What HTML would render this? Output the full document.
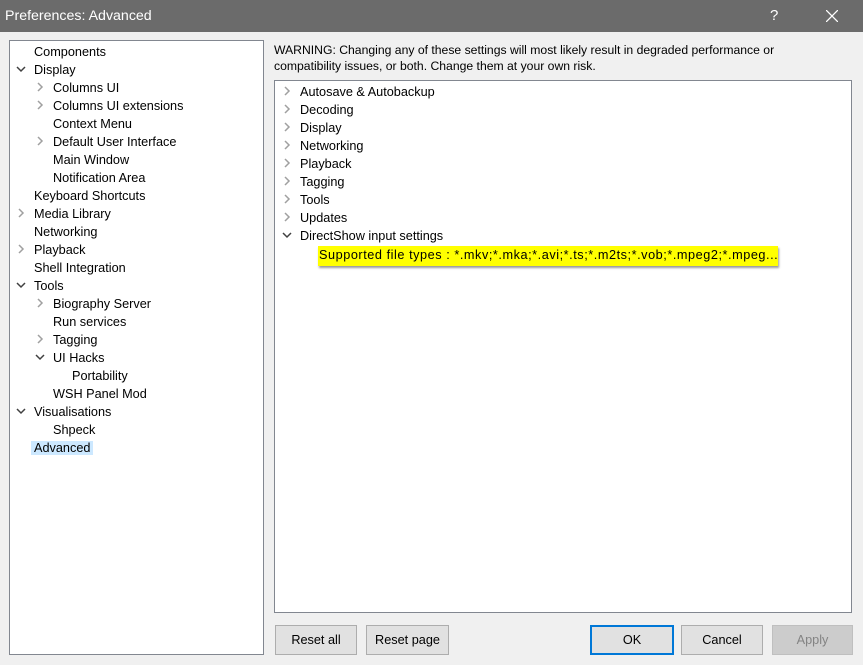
<!DOCTYPE html><html><head><style>
body{margin:0;width:863px;height:665px;background:#f0f0f0;font-family:"Liberation Sans",sans-serif;font-size:12.7px;color:#000;position:relative;overflow:hidden}
.t{position:absolute;white-space:nowrap;line-height:18px;height:18px}
.box{position:absolute;background:#fff;border:1px solid #828790}
.btn{position:absolute;top:625px;height:28px;background:#e1e1e1;border:1px solid #adadad;text-align:center;line-height:28px;font-size:12.7px}
svg.c{position:absolute}
.sel{background:#cce8ff;padding:0 3px;margin-left:-3px}
</style></head><body>
<div style="position:absolute;left:0;top:0;width:863px;height:32px;background:#6b6b6b;color:#fff">
<div style="position:absolute;left:5px;top:8px;font-size:14.2px">Preferences: Advanced</div>
<div style="position:absolute;left:770px;top:7px;font-size:15px">?</div>
<svg style="position:absolute;left:826px;top:10px" width="12" height="12"><path d="M0 0L12 12M12 0L0 12" stroke="#fff" stroke-width="1.3"/></svg>
</div>
<div class="box" style="left:9px;top:40px;width:253px;height:613px"></div>
<div class="t" style="left:274px;top:41px;font-size:12.2px">WARNING: Changing any of these settings will most likely result in degraded performance or</div>
<div class="t" style="left:274px;top:57px;font-size:12.2px">compatibility issues, or both. Change them at your own risk.</div>
<div class="box" style="left:274px;top:80px;width:576px;height:531px"></div>
<div id="L"></div><div id="R"></div>
<div style="position:absolute;left:318px;top:246px;width:460px;height:20px;background:#ffff00;box-shadow:1px 2px 2px #999"></div>
<div class="t" style="left:319px;top:246px;letter-spacing:0.55px">Supported file types : *.mkv;*.mka;*.avi;*.ts;*.m2ts;*.vob;*.mpeg2;*.mpeg...</div>
<div class="btn" style="left:275px;width:80px">Reset all</div>
<div class="btn" style="left:366px;width:81px">Reset page</div>
<div class="btn" style="left:590px;width:80px;border:2px solid #0078d7;height:26px;line-height:26px">OK</div>
<div class="btn" style="left:681px;width:80px">Cancel</div>
<div class="btn" style="left:772px;width:79px;background:#cccccc;border-color:#bfbfbf;color:#838383">Apply</div>
<script>
var L=[["Components",0,0],["Display",0,2],["Columns UI",1,1],["Columns UI extensions",1,1],["Context Menu",1,0],["Default User Interface",1,1],["Main Window",1,0],["Notification Area",1,0],["Keyboard Shortcuts",0,0],["Media Library",0,1],["Networking",0,0],["Playback",0,1],["Shell Integration",0,0],["Tools",0,2],["Biography Server",1,1],["Run services",1,0],["Tagging",1,1],["UI Hacks",1,2],["Portability",2,0],["WSH Panel Mod",1,0],["Visualisations",0,2],["Shpeck",1,0],["Advanced",0,3]];
var h="";
function chev(x,y,o){return o==1?'<svg class="c" style="left:'+(x-3)+'px;top:'+(y-5)+'px" width="8" height="10"><path d="M1 1L5 5L1 9" fill="none" stroke="#a0a0a0" stroke-width="1.5"/></svg>':'<svg class="c" style="left:'+(x-5)+'px;top:'+(y-3)+'px" width="10" height="8"><path d="M1 1L5 5L9 1" fill="none" stroke="#404040" stroke-width="1.5"/></svg>';}
L.forEach(function(r,i){var y=51+18*i,x=34+19*r[1];if(r[2]==1||r[2]==2)h+=chev(x-13,y,r[2]);
h+='<div class="t" style="left:'+x+'px;top:'+(y-8)+'px">'+(r[2]==3?'<span class="sel">'+r[0]+'</span>':r[0])+'</div>';});
var R=["Autosave & Autobackup","Decoding","Display","Networking","Playback","Tagging","Tools","Updates","DirectShow input settings"];
R.forEach(function(n,i){var y=91+18*i;h+=chev(287,y,i==8?2:1);h+='<div class="t" style="left:300px;top:'+(y-8)+'px">'+n+'</div>';});
document.getElementById("L").innerHTML=h;
</script>
</body></html>
